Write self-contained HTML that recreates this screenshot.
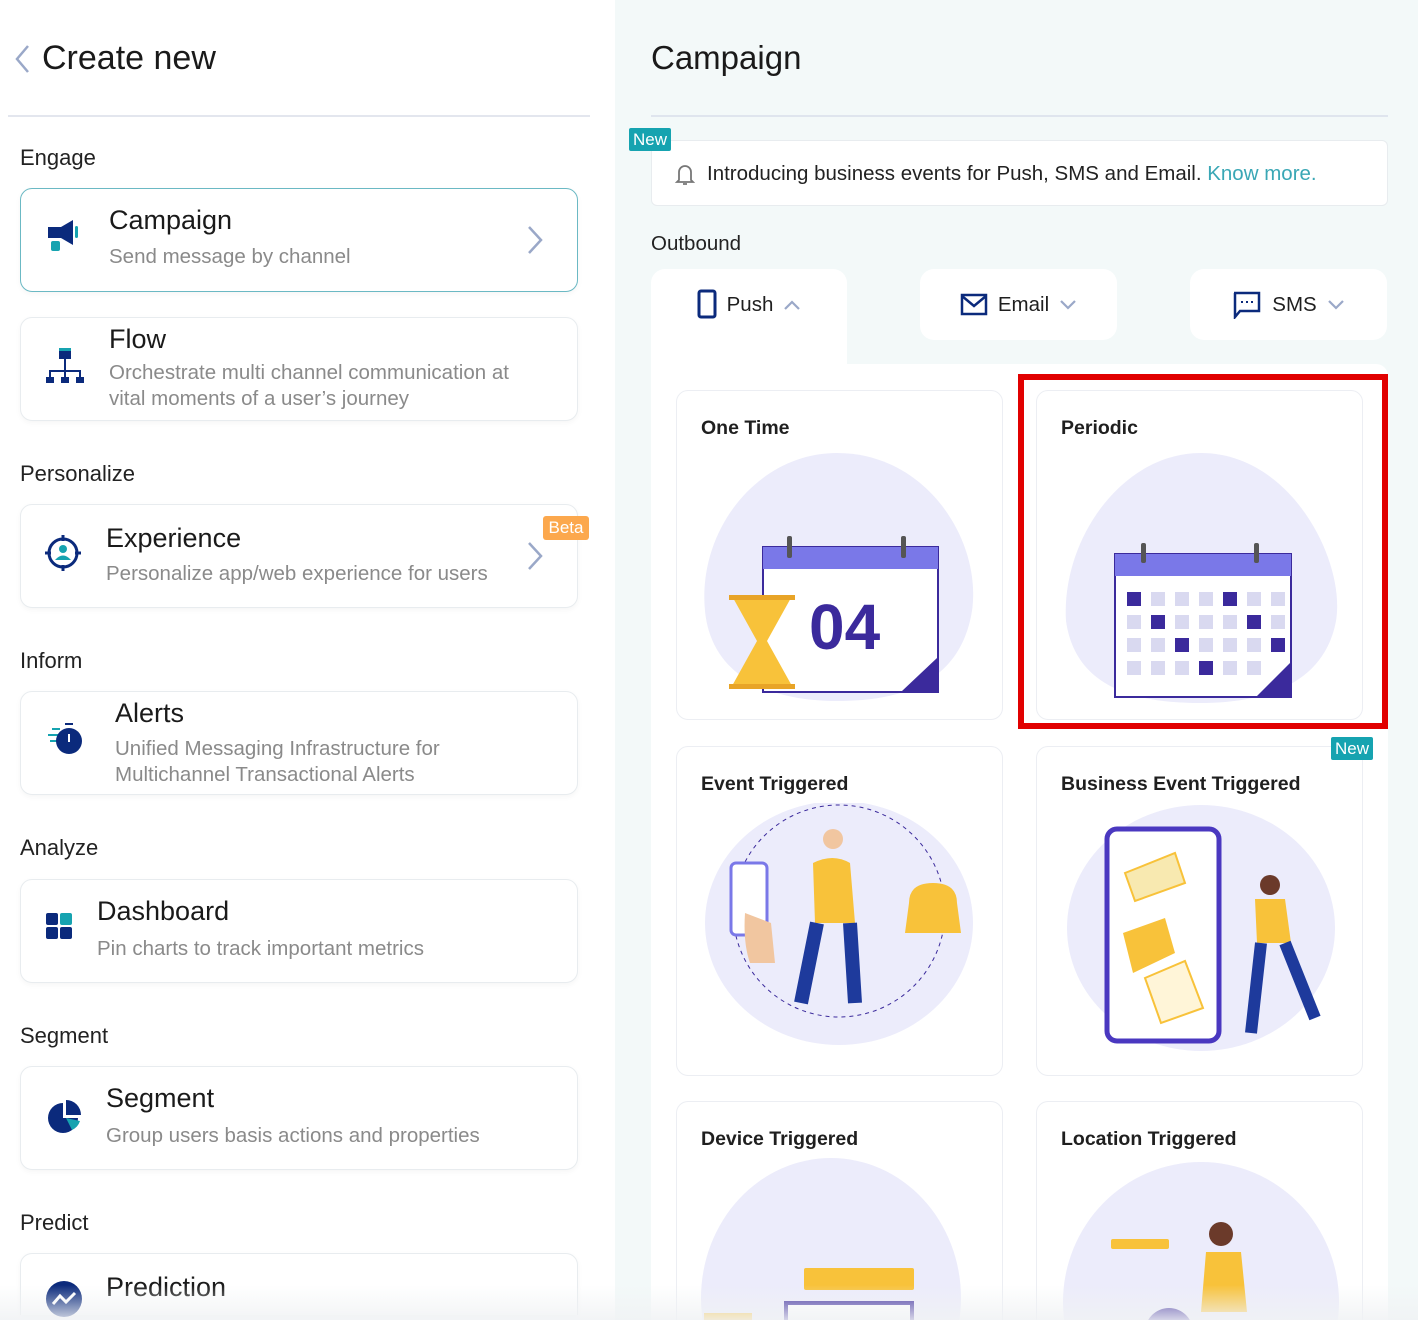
<!DOCTYPE html>
<html style="overflow:hidden"><head><meta charset="utf-8"><style>
*{box-sizing:border-box;margin:0;padding:0}
html,body{width:1418px;height:1320px;overflow:hidden}
body{font-family:"Liberation Sans",sans-serif;color:#1f1f1f;position:relative;background:#fff}
.a{position:absolute}
.left{left:0;top:0;width:615px;height:1320px;background:#fff;overflow:hidden}
.right{left:615px;top:0;width:803px;height:1320px;background:#f3f9f9;overflow:hidden}
.sec{font-size:22px;color:#222;left:20px}
.card{left:20px;width:558px;height:104px;border:1px solid #e8ecef;border-radius:12px;background:#fff;box-shadow:0 2px 6px rgba(0,0,0,.04)}
.t{font-size:27px;color:#1a1a1a}
.s{font-size:20.5px;color:#8a8a8a;line-height:26px}
.chev{right:32px;top:36px}
.tab{background:#fff;border-radius:14px;height:71px;font-size:20.5px;display:flex;align-items:center;justify-content:center;gap:10px}
.ct{background:#fff;border:1px solid #eceef3;border-radius:12px;width:327px;height:330px;overflow:hidden}
.ct h3{position:absolute;left:24px;top:26px;font-size:19.5px;font-weight:bold;color:#1f1f1f}
.badge{background:#16a3b0;color:#fff;font-size:17px;padding:0 4px;height:23px;line-height:23px;border-radius:2px}
</style></head><body>
<div class="a left">
 <svg class="a" style="left:12px;top:44px" width="20" height="30"><path d="M16 2 L5 15 L16 28" stroke="#9aa8c8" stroke-width="2.5" fill="none"/></svg>
 <div class="a" style="left:42px;top:39px;font-size:34px;color:#1a1a1a">Create new</div>
 <div class="a" style="left:8px;top:115px;width:582px;height:2px;background:#e3e6ee"></div>
 <div class="a sec" style="top:145px">Engage</div>
 <div class="a card" style="top:188px;border-color:#6bb9c4">
  <svg class="a" style="left:26px;top:30px" width="40" height="36"><rect x="1" y="8" width="13" height="11" fill="#0b2a7c"/><path d="M14 8 L26 1 L26 26 L14 19Z" fill="#0b2a7c"/><rect x="28" y="7" width="3" height="12" rx="1.5" fill="#16a3b0"/><rect x="4" y="22" width="9" height="10" rx="2" fill="#16a3b0"/></svg>
  <div class="a t" style="left:88px;top:16px">Campaign</div>
  <div class="a s" style="left:88px;top:55px">Send message by channel</div>
  <svg class="a chev" width="20" height="30"><path d="M4 2 L16 15 L4 28" stroke="#9aa8c8" stroke-width="2.5" fill="none"/></svg>
 </div>
 <div class="a card" style="top:317px">
  <svg class="a" style="left:24px;top:28px" width="40" height="38"><rect x="14" y="2" width="12" height="11" fill="#0b2a7c"/><rect x="14" y="2" width="12" height="3" fill="#16a3b0"/><path d="M20 13 V25 M5 33 V25 H35 V33 M20 25 V33" stroke="#0b2a7c" stroke-width="2" fill="none"/><rect x="1" y="31" width="8" height="6" fill="#0b2a7c"/><rect x="16" y="31" width="8" height="6" fill="#0b2a7c"/><rect x="31" y="31" width="8" height="6" fill="#0b2a7c"/></svg>
  <div class="a t" style="left:88px;top:6px">Flow</div>
  <div class="a s" style="left:88px;top:42px">Orchestrate multi channel communication at<br>vital moments of a user’s journey</div>
 </div>
 <div class="a sec" style="top:461px">Personalize</div>
 <div class="a card" style="top:504px">
  <svg class="a" style="left:22px;top:28px" width="40" height="40"><circle cx="20" cy="20" r="14" stroke="#0b2a7c" stroke-width="3" fill="none"/><path d="M20 2V8M20 32V38M2 20H8M32 20H38" stroke="#0b2a7c" stroke-width="3"/><circle cx="20" cy="16" r="4" fill="#16a3b0"/><path d="M12 27 Q20 18 28 27Z" fill="#16a3b0"/></svg>
  <div class="a t" style="left:85px;top:18px">Experience</div>
  <div class="a s" style="left:85px;top:56px">Personalize app/web experience for users</div>
  <svg class="a chev" width="20" height="30"><path d="M4 2 L16 15 L4 28" stroke="#9aa8c8" stroke-width="2.5" fill="none"/></svg>
 </div>
 <div class="a" style="left:543px;top:516px;width:46px;height:24px;background:#fca84d;color:#fff;font-size:17px;text-align:center;line-height:24px;border-radius:3px">Beta</div>
 <div class="a sec" style="top:648px">Inform</div>
 <div class="a card" style="top:691px">
  <svg class="a" style="left:26px;top:30px" width="40" height="36"><rect x="5" y="6" width="8" height="2" fill="#16a3b0"/><rect x="1" y="12" width="10" height="2" fill="#16a3b0"/><rect x="3" y="18" width="9" height="2" fill="#16a3b0"/><rect x="18" y="1" width="8" height="2" fill="#0b2a7c"/><circle cx="22" cy="19" r="13" fill="#0b2a7c"/><rect x="21" y="12" width="2" height="8" fill="#fff"/></svg>
  <div class="a t" style="left:94px;top:6px">Alerts</div>
  <div class="a s" style="left:94px;top:44px">Unified Messaging Infrastructure for<br>Multichannel Transactional Alerts</div>
 </div>
 <div class="a sec" style="top:835px">Analyze</div>
 <div class="a card" style="top:879px">
  <svg class="a" style="left:24px;top:32px" width="30" height="30"><rect x="1" y="1" width="12" height="12" rx="2" fill="#0b2a7c"/><rect x="15" y="1" width="12" height="12" rx="2" fill="#16a3b0"/><rect x="1" y="15" width="12" height="12" rx="2" fill="#0b2a7c"/><rect x="15" y="15" width="12" height="12" rx="2" fill="#0b2a7c"/></svg>
  <div class="a t" style="left:76px;top:16px">Dashboard</div>
  <div class="a s" style="left:76px;top:56px">Pin charts to track important metrics</div>
 </div>
 <div class="a sec" style="top:1023px">Segment</div>
 <div class="a card" style="top:1066px">
  <svg class="a" style="left:24px;top:30px" width="40" height="40"><path d="M18 6 A15 15 0 1 0 33 21 L18 21Z" fill="#0b2a7c"/><path d="M21 3 A15 15 0 0 1 36 18 L21 18Z" fill="#0b2a7c"/><path d="M21 21 L35 24 A15 15 0 0 1 27 33Z" fill="#16a3b0"/></svg>
  <div class="a t" style="left:85px;top:16px">Segment</div>
  <div class="a s" style="left:85px;top:56px">Group users basis actions and properties</div>
 </div>
 <div class="a sec" style="top:1210px">Predict</div>
 <div class="a card" style="top:1253px;height:62px;border-bottom:none;border-radius:12px 12px 0 0">
  <svg class="a" style="left:24px;top:26px" width="38" height="38"><circle cx="19" cy="19" r="18" fill="#0b2a7c"/><path d="M8 24 L15 16 L21 22 L30 13" stroke="#fff" stroke-width="3" fill="none"/></svg>
  <div class="a t" style="left:85px;top:18px">Prediction</div>
 </div>
</div>

<div class="a right">
 <div class="a" style="left:36px;top:39px;font-size:33px;color:#1a1a1a">Campaign</div>
 <div class="a" style="left:36px;top:115px;width:737px;height:2px;background:#dfe5ee"></div>
 <div class="a" style="left:36px;top:140px;width:737px;height:66px;background:#fff;border:1px solid #e8ecef;border-radius:6px">
  <svg class="a" style="left:22px;top:20px" width="22" height="26"><path d="M5 19 V11 A6 6 0 0 1 17 11 V19 L19 21 H3Z M9 23 H13" stroke="#777" stroke-width="1.8" fill="none"/></svg>
  <div class="a" style="left:55px;top:21px;font-size:20.5px;color:#222">Introducing business events for Push, SMS and Email. <span style="color:#3aa7b5">Know more.</span></div>
 </div>
 <div class="a badge" style="left:14px;top:128px">New</div>
 <div class="a" style="left:36px;top:232px;font-size:20.5px;color:#222">Outbound</div>
 <div class="a tab" style="left:36px;top:269px;width:196px;height:110px;border-radius:14px 14px 0 0;align-items:flex-start;padding-top:20px">
  <svg width="20" height="30"><rect x="2" y="2" width="16" height="26" rx="2" stroke="#0b2a7c" stroke-width="3" fill="none"/></svg><span style="margin-top:4px">Push</span>
  <svg width="18" height="30"><path d="M2 20 L9 13 L16 20" stroke="#9aa8c8" stroke-width="2.2" fill="none"/></svg></div>
 <div class="a tab" style="left:305px;top:269px;width:197px">
  <svg width="28" height="24"><rect x="2" y="2" width="24" height="19" stroke="#0b2a7c" stroke-width="2.5" fill="none"/><path d="M2 3 L14 13 L26 3" stroke="#0b2a7c" stroke-width="2.5" fill="none"/></svg>Email
  <svg width="18" height="14"><path d="M2 3 L9 10 L16 3" stroke="#9aa8c8" stroke-width="2.2" fill="none"/></svg></div>
 <div class="a tab" style="left:575px;top:269px;width:197px">
  <svg width="30" height="28"><path d="M2 2 H27 V20 H8 L3 26 V2Z" stroke="#0b2a7c" stroke-width="2.5" fill="none"/><path d="M9 11H11M14 11H16M19 11H21" stroke="#0b2a7c" stroke-width="2"/></svg>SMS
  <svg width="18" height="14"><path d="M2 3 L9 10 L16 3" stroke="#9aa8c8" stroke-width="2.2" fill="none"/></svg></div>
 <div class="a" style="left:36px;top:364px;width:737px;height:956px;background:#fff;border-radius:0 12px 0 0"></div>

 <div class="a ct" style="left:61px;top:390px"><h3>One Time</h3>
  <svg class="a" style="left:20px;top:60px" width="280" height="260"><path d="M140 2 C230 2 285 90 275 160 C262 240 190 250 140 250 C80 250 15 230 8 160 C0 80 60 2 140 2Z" fill="#ececfb"/>
  <rect x="66" y="96" width="175" height="145" fill="#fff" stroke="#3b2a9c" stroke-width="2"/><rect x="66" y="96" width="175" height="22" fill="#7a78e8"/><rect x="90" y="85" width="5" height="22" rx="2" fill="#555"/><rect x="204" y="85" width="5" height="22" rx="2" fill="#555"/>
  <text x="112" y="198" font-size="64" font-weight="bold" fill="#3b2a9c" font-family="Liberation Sans">04</text><path d="M205 240 L240 207 L240 240Z" fill="#3b2a9c"/>
  <path d="M35 145 H95 L70 190 L95 235 H35 L60 190Z" fill="#f8c23a"/><rect x="32" y="144" width="66" height="5" fill="#e8a427"/><rect x="32" y="233" width="66" height="5" fill="#e8a427"/></svg></div>

 <div class="a ct" style="left:421px;top:390px"><h3>Periodic</h3>
  <svg class="a" style="left:24px;top:60px" width="280" height="260"><path d="M140 2 C230 2 285 110 275 170 C262 240 190 252 140 252 C80 252 15 240 5 170 C0 90 60 2 140 2Z" fill="#ececfb"/>
  <rect x="54" y="103" width="176" height="143" fill="#fff" stroke="#3b2a9c" stroke-width="2"/><rect x="54" y="103" width="176" height="22" fill="#7a78e8"/><rect x="80" y="92" width="5" height="20" rx="2" fill="#555"/><rect x="193" y="92" width="5" height="20" rx="2" fill="#555"/>
  <g fill="#d9d9f0"><rect x="66" y="141" width="14" height="14"/><rect x="90" y="141" width="14" height="14"/><rect x="114" y="141" width="14" height="14"/><rect x="138" y="141" width="14" height="14"/><rect x="186" y="141" width="14" height="14"/><rect x="210" y="141" width="14" height="14"/><rect x="66" y="164" width="14" height="14"/><rect x="114" y="164" width="14" height="14"/><rect x="138" y="164" width="14" height="14"/><rect x="162" y="164" width="14" height="14"/><rect x="210" y="164" width="14" height="14"/><rect x="66" y="187" width="14" height="14"/><rect x="90" y="187" width="14" height="14"/><rect x="138" y="187" width="14" height="14"/><rect x="162" y="187" width="14" height="14"/><rect x="186" y="187" width="14" height="14"/><rect x="66" y="210" width="14" height="14"/><rect x="90" y="210" width="14" height="14"/><rect x="114" y="210" width="14" height="14"/><rect x="162" y="210" width="14" height="14"/><rect x="186" y="210" width="14" height="14"/></g>
  <g fill="#3b2a9c"><rect x="66" y="141" width="14" height="14"/><rect x="162" y="141" width="14" height="14"/><rect x="90" y="164" width="14" height="14"/><rect x="186" y="164" width="14" height="14"/><rect x="114" y="187" width="14" height="14"/><rect x="210" y="187" width="14" height="14"/><rect x="138" y="210" width="14" height="14"/></g><path d="M196 245 L229 212 L229 245Z" fill="#3b2a9c"/></svg></div>
 <div class="a" style="left:403px;top:374px;width:370px;height:355px;border:6px solid #e10000"></div>

 <div class="a ct" style="left:61px;top:746px"><h3>Event Triggered</h3>
  <svg class="a" style="left:28px;top:56px" width="270" height="250"><ellipse cx="134" cy="120" rx="134" ry="122" fill="#ececfb"/><circle cx="134" cy="108" r="106" stroke="#3b2a9c" stroke-dasharray="4 4" fill="none"/>
  <rect x="26" y="60" width="36" height="72" rx="5" fill="#fff" stroke="#7a78e8" stroke-width="3"/><path d="M40 110 Q38 140 45 160 L70 160 L66 120Z" fill="#f1c6a0"/>
  <circle cx="128" cy="36" r="10" fill="#f1c6a0"/><path d="M108 60 Q128 50 145 60 L150 120 L110 120Z" fill="#f8c23a"/><path d="M112 120 L96 200 M145 120 L150 200" stroke="#1e3a9c" stroke-width="14"/>
  <path d="M204 100 Q204 80 228 80 Q252 80 252 100 L256 130 H200Z" fill="#f8c23a"/></svg></div>
 <div class="a ct" style="left:421px;top:746px"><h3>Business Event Triggered</h3>
  <svg class="a" style="left:28px;top:56px" width="275" height="250"><ellipse cx="136" cy="125" rx="134" ry="123" fill="#ececfb"/><rect x="42" y="26" width="112" height="212" rx="10" fill="#fff" stroke="#4a38c0" stroke-width="5"/>
  <path d="M60 70 L110 50 L120 80 L70 98Z" fill="#f8e9b0" stroke="#f8c23a" stroke-width="2"/><path d="M58 130 L100 115 L110 150 L68 170Z" fill="#f8c23a"/><path d="M80 175 L120 158 L138 205 L96 220Z" fill="#fff5d8" stroke="#f8c23a" stroke-width="2"/>
  <circle cx="205" cy="82" r="10" fill="#6b3a2a"/><path d="M190 96 L220 96 L226 140 L192 140Z" fill="#f8c23a"/><path d="M196 140 L186 230 M220 140 L250 215" stroke="#1e3a9c" stroke-width="12"/></svg></div>
 <div class="a badge" style="left:716px;top:737px">New</div>

 <div class="a ct" style="left:61px;top:1101px;height:219px;border-bottom:none;border-radius:12px 12px 0 0"><h3>Device Triggered</h3>
  <svg class="a" style="left:24px;top:56px" width="260" height="200"><ellipse cx="130" cy="140" rx="130" ry="140" fill="#ececfb"/><rect x="103" y="110" width="110" height="22" rx="2" fill="#f8c23a"/><rect x="85" y="145" width="126" height="60" fill="#fff" stroke="#3b2a9c" stroke-width="4"/><rect x="3" y="155" width="48" height="10" fill="#f8c23a"/></svg></div>
 <div class="a ct" style="left:421px;top:1101px;height:219px;border-bottom:none;border-radius:12px 12px 0 0"><h3>Location Triggered</h3>
  <svg class="a" style="left:24px;top:60px" width="280" height="200"><ellipse cx="140" cy="140" rx="138" ry="140" fill="#ececfb"/><rect x="50" y="77" width="58" height="10" rx="2" fill="#f8c23a"/><circle cx="160" cy="72" r="12" fill="#6b3a2a"/><path d="M145 90 L180 90 L186 150 L140 150Z" fill="#f8c23a"/><circle cx="108" cy="170" r="24" fill="#3b2a9c"/></svg></div>
</div>
<div class="a" style="left:0;top:1285px;width:1418px;height:35px;background:linear-gradient(rgba(255,255,255,0),rgba(240,242,244,.85))"></div>
</body></html>
